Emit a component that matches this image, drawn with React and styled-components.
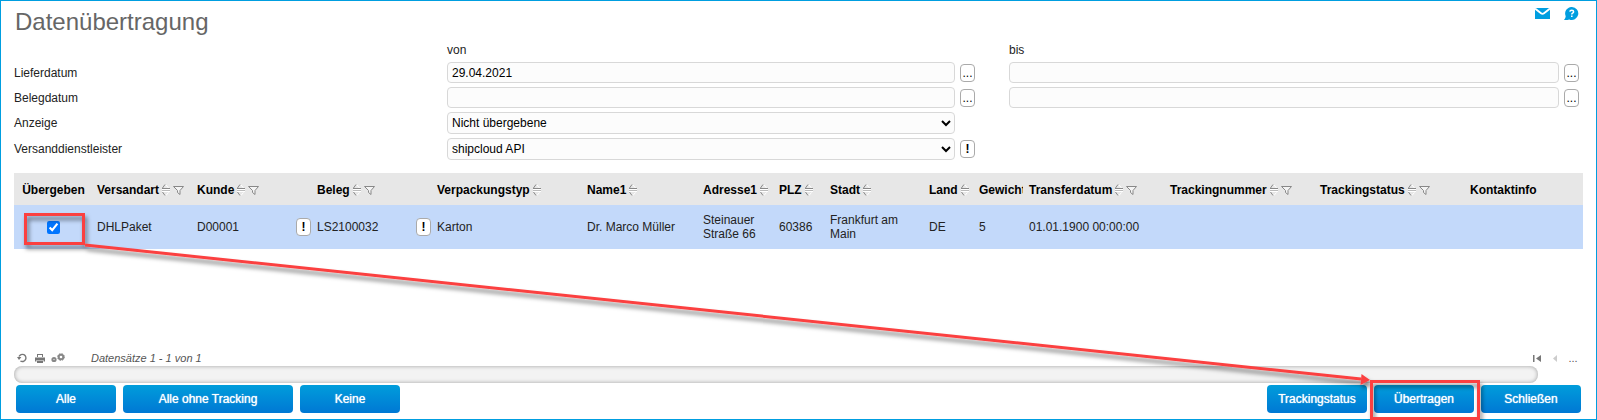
import React from 'react';
import styled, { createGlobalStyle } from 'styled-components';

const GlobalStyle = createGlobalStyle`
  * {
    box-sizing: border-box;
  }

  body {
    margin: 0;
    background: #fff;
    color: #222;
    font-family: 'Liberation Sans', Arial, sans-serif;
    font-size: 12px;
    line-height: 14px;
  }

  button,
  input,
  select {
    font: inherit;
  }
`;

const Page = styled.div`
  position: relative;
  display: flex;
  flex-direction: column;
  min-height: 100vh;
  padding: 6px 13px;
  border: 1px solid #009ee0;
`;

const PageHeader = styled.header`
  display: flex;
  justify-content: space-between;
  align-items: flex-start;
  padding-right: 4px;
  height: 35px;
`;

const Title = styled.h1`
  margin: 0;
  padding-left: 1px;
  color: #666;
  font-size: 24px;
  font-weight: normal;
  line-height: 30px;
`;

const HeaderLinks = styled.nav`
  display: flex;
  gap: 14px;

  a {
    display: flex;
  }
`;

const Filters = styled.form`
  display: flex;
  flex-direction: column;
  gap: 4px;
  padding-right: 4px;
`;

const FilterRow = styled.div`
  display: grid;
  grid-template-columns: 433px 562fr 570fr;
  align-items: center;
  min-height: ${props => (props.$head ? '16px' : '21px')};
`;

const Field = styled.div`
  display: flex;
  align-items: center;
  gap: 5px;
  padding-right: ${props => (props.$last ? '0' : '34px')};
`;

const TextInput = styled.input`
  flex: 1;
  min-width: 0;
  height: 21px;
  padding: 0 4px;
  border: 1px solid #d8d8d8;
  border-radius: 4px;
  background: #fcfcfc;
  color: #000;
`;

const Select = styled.select`
  flex: 1;
  min-width: 0;
  height: 22px;
  padding: 0 1px 0 0;
  border: 1px solid #d8d8d8;
  border-radius: 4px;
  background: #fcfcfc;
  color: #000;
`;

const SmallButton = styled.button`
  flex: none;
  width: 15px;
  height: 18px;
  padding: 0;
  border: 1px solid #aaa;
  border-radius: 4px;
  background: #fff;
  color: #000;
  font-weight: ${props => (props.$bold ? 'bold' : 'normal')};
  line-height: 14px;
`;

const Spacer = styled.span`
  flex: none;
  width: 15px;
`;

const Table = styled.table`
  width: 100%;
  margin-top: 13px;
  border-collapse: collapse;
  table-layout: fixed;

  th,
  td {
    padding: 0 0 0 6px;
    text-align: left;
    overflow: hidden;
  }

  th:first-child,
  td:first-child {
    padding-left: 2px;
  }

  th {
    height: 32px;
    padding-top: 1px;
    background: #e7e7e7;
    color: #000;
    white-space: nowrap;
  }

  td {
    height: 44px;
    background: #c3d9fa;
  }
`;

const HeadCell = styled.span`
  display: flex;
  align-items: center;
  justify-content: ${props => (props.$center ? 'center' : 'flex-start')};

  svg {
    flex: none;
  }
`;

const CellContent = styled.div`
  display: flex;
  align-items: center;
  justify-content: ${props => (props.$center ? 'center' : 'space-between')};
`;

const Checkbox = styled.input`
  width: 13px;
  height: 13px;
  margin: 0;
`;

const Footer = styled.footer`
  margin-top: auto;
`;

const Pager = styled.div`
  display: flex;
  align-items: center;
  gap: 4px;
  height: 16px;
  padding: 0 3px 0 1px;
  color: #555;
  font-size: 11px;
`;

const RecordCount = styled.em`
  flex: 1;
  padding-left: 22px;
`;

const IconButton = styled.button`
  display: flex;
  justify-content: center;
  align-items: center;
  width: 14px;
  height: 14px;
  padding: 0;
  border: 0;
  background: none;
  color: #555;
`;

const ScrollTrack = styled.div`
  height: 17px;
  margin: 0 45px 2px 0;
  border-radius: 8px;
  background: #f3f3f3;
  box-shadow: inset 0 0 4px rgba(0, 0, 0, 0.35);
`;

const Actions = styled.div`
  display: flex;
  justify-content: space-between;
  padding: 0 2px;
`;

const ActionGroup = styled.div`
  display: flex;
  gap: 7px;
`;

const ActionButton = styled.button`
  width: ${props => (props.$wide ? '170px' : '100px')};
  height: 28px;
  padding: 0;
  border: 0;
  border-radius: 4px;
  background: linear-gradient(#009ddb, #0078d4);
  color: #fff;
  text-shadow: 0 0 1px #fff;
`;

const Annotation = styled.svg`
  position: absolute;
  top: -1px;
  left: -1px;
  pointer-events: none;
`;

const columns = [
  { label: 'Übergeben', width: 77, center: true },
  { label: 'Versandart', width: 100, sort: true, filter: true },
  { label: 'Kunde', width: 120, sort: true, filter: true },
  { label: 'Beleg', width: 120, sort: true, filter: true },
  { label: 'Verpackungstyp', width: 150, sort: true },
  { label: 'Name1', width: 116, sort: true },
  { label: 'Adresse1', width: 76, sort: true },
  { label: 'PLZ', width: 51, sort: true },
  { label: 'Stadt', width: 99, sort: true },
  { label: 'Land', width: 50, sort: true },
  { label: 'Gewicht', width: 50 },
  { label: 'Transferdatum', width: 141, sort: true, filter: true },
  { label: 'Trackingnummer', width: 150, sort: true, filter: true },
  { label: 'Trackingstatus', width: 150, sort: true, filter: true },
  { label: 'Kontaktinfo', width: 119 },
];

const SortIcon = () => (
  <svg width="13" height="14" viewBox="0 0 13 14" fill="none">
    <path stroke="#fff" d="M7 2L9.5 5M3 6.5H11M3 8.5H11M9.5 9.5L7 12.5" />
    <path stroke="#888" d="M3.5 5L6 1.5M3 5.5H11M3.5 9L6 12.5" />
    <path stroke="#bbb" d="M3 7.5H11" />
  </svg>
);

const FilterIcon = () => (
  <svg width="14" height="12" viewBox="0 0 14 12" fill="none" stroke="#888">
    <path fill="#f4f4f4" d="M1.5 2.5H11.5L8 6.5V10.5L5.5 8.5V6.5Z" />
  </svg>
);

const MailIcon = () => (
  <svg width="15" height="13" viewBox="0 0 15 13">
    <path fill="#009ee0" d="M0 1H15V12H0Z" />
    <path fill="none" stroke="#fff" strokeWidth="1.8" d="M0 1.5L6 6.3Q7.5 7.5 9 6.3L15 1.5" />
  </svg>
);

const HelpIcon = () => (
  <svg width="15" height="14" viewBox="0 0 15 14">
    <path fill="#009ee0" d="M8 0A6.5 6.5 0 1 1 5.3 12.5Q3 13.2 0 13Q1.6 11.5 1.7 9.2A6.5 6.5 0 0 1 8 0Z" />
    <path fill="none" stroke="#fff" strokeWidth="1.5" d="M5.8 4.6Q6 3.2 7.8 3.2Q9.6 3.2 9.6 4.7Q9.6 5.6 8.5 6.2Q7.8 6.6 7.8 7.6M7.8 8.6V10" />
  </svg>
);

const DateField = ({ id, label, value, last }) => (
  <Field $last={last}>
    <TextInput id={id} aria-label={label} type="text" defaultValue={value} />
    <SmallButton type="button">...</SmallButton>
  </Field>
);

function FilterForm() {
  return (
    <Filters>
      <FilterRow $head>
        <span />
        <span>von</span>
        <span>bis</span>
      </FilterRow>
      <FilterRow>
        <label htmlFor="lieferdatum">Lieferdatum</label>
        <DateField id="lieferdatum" value="29.04.2021" />
        <DateField label="Lieferdatum bis" last />
      </FilterRow>
      <FilterRow>
        <label htmlFor="belegdatum">Belegdatum</label>
        <DateField id="belegdatum" />
        <DateField label="Belegdatum bis" last />
      </FilterRow>
      <FilterRow>
        <label htmlFor="anzeige">Anzeige</label>
        <Field>
          <Select id="anzeige">
            <option>Nicht übergebene</option>
          </Select>
          <Spacer />
        </Field>
      </FilterRow>
      <FilterRow>
        <label htmlFor="dienstleister">Versanddienstleister</label>
        <Field>
          <Select id="dienstleister">
            <option>shipcloud API</option>
          </Select>
          <SmallButton type="button" $bold>!</SmallButton>
        </Field>
      </FilterRow>
    </Filters>
  );
}

function DeliveryTable() {
  return (
    <Table>
      <colgroup>
        {columns.map(col => (
          <col key={col.label} width={`${(col.width / 1569) * 100}%`} />
        ))}
      </colgroup>
      <thead>
        <tr>
          {columns.map(col => (
            <th key={col.label}>
              <HeadCell $center={col.center}>
                {col.label}
                {col.sort && <SortIcon />}
                {col.filter && <FilterIcon />}
              </HeadCell>
            </th>
          ))}
        </tr>
      </thead>
      <tbody>
        <tr>
          <td>
            <CellContent $center>
              <Checkbox type="checkbox" aria-label="Übergeben" defaultChecked />
            </CellContent>
          </td>
          <td>DHLPaket</td>
          <td>
            <CellContent>
              D00001
              <SmallButton type="button" $bold>!</SmallButton>
            </CellContent>
          </td>
          <td>
            <CellContent>
              LS2100032
              <SmallButton type="button" $bold>!</SmallButton>
            </CellContent>
          </td>
          <td>Karton</td>
          <td>Dr. Marco Müller</td>
          <td>Steinauer Straße 66</td>
          <td>60386</td>
          <td>Frankfurt am<br />Main</td>
          <td>DE</td>
          <td>5</td>
          <td>01.01.1900 00:00:00</td>
          <td />
          <td />
          <td />
        </tr>
      </tbody>
    </Table>
  );
}

// red frames and arrow from the checked row to the transfer button
function Highlight() {
  return (
    <Annotation width="1597" height="420" viewBox="0 0 1597 420">
      <defs>
        <filter id="shadow" x="-5%" y="-5%" width="110%" height="115%">
          <feDropShadow dx="2" dy="4" stdDeviation="2" floodOpacity="0.5" />
        </filter>
      </defs>
      <g filter="url(#shadow)" fill="none" stroke="#fb4140" strokeWidth="3">
        <rect x="25.5" y="214.5" width="58" height="29" />
        <rect x="1371.5" y="381.5" width="107" height="37" />
        <path d="M85 245L1361 379" />
        <path fill="#fb4140" stroke="none" d="M1370 380L1360.5 385L1361.5 374Z" />
      </g>
    </Annotation>
  );
}

export default function App() {
  return (
    <Page>
      <GlobalStyle />
      <PageHeader>
        <Title>Datenübertragung</Title>
        <HeaderLinks>
          <a href="#mail" aria-label="E-Mail"><MailIcon /></a>
          <a href="#hilfe" aria-label="Hilfe"><HelpIcon /></a>
        </HeaderLinks>
      </PageHeader>
      <FilterForm />
      <DeliveryTable />
      <Footer>
        <Pager>
          <IconButton type="button" aria-label="Aktualisieren">
            <svg width="10" height="10" viewBox="0 0 10 10" fill="none" stroke="#777" strokeWidth="1.4">
              <path d="M2 3.6A3.6 3.6 0 1 1 3.4 8" />
              <path fill="#777" stroke="none" d="M0 4H4.4L2 7Z" />
            </svg>
          </IconButton>
          <IconButton type="button" aria-label="Drucken">
            <svg width="10" height="9" viewBox="0 0 10 9" fill="#777">
              <path d="M2 0H8V3H7V1H3V3H2ZM0 3.5H10V7.5H8.5V6H1.5V7.5H0ZM2 6.5H8V9H2Z" />
            </svg>
          </IconButton>
          <IconButton type="button" aria-label="Einstellungen">
            <svg width="14" height="10" viewBox="0 0 14 10" fill="none" stroke="#888" strokeWidth="2">
              <circle cx="3" cy="6.5" r="1.6" />
              <circle cx="10" cy="4" r="2.3" />
              <circle cx="10" cy="4" r="3.4" strokeWidth="1" strokeDasharray="1.4 1.3" />
            </svg>
          </IconButton>
          <RecordCount>Datensätze 1 - 1 von 1</RecordCount>
          <IconButton type="button" aria-label="Erste Seite">
            <svg width="8" height="7" viewBox="0 0 8 7" fill="#777">
              <path d="M0 0H1.5V7H0ZM8 0V7L3 3.5Z" />
            </svg>
          </IconButton>
          <IconButton type="button" aria-label="Vorherige Seite">
            <svg width="4" height="7" viewBox="0 0 4 7" fill="#ccc">
              <path d="M4 0V7L0 3.5Z" />
            </svg>
          </IconButton>
          <IconButton type="button">...</IconButton>
        </Pager>
        <ScrollTrack />
        <Actions>
          <ActionGroup>
            <ActionButton type="button">Alle</ActionButton>
            <ActionButton type="button" $wide>Alle ohne Tracking</ActionButton>
            <ActionButton type="button">Keine</ActionButton>
          </ActionGroup>
          <ActionGroup>
            <ActionButton type="button">Trackingstatus</ActionButton>
            <ActionButton type="button">Übertragen</ActionButton>
            <ActionButton type="button">Schließen</ActionButton>
          </ActionGroup>
        </Actions>
      </Footer>
      <Highlight />
    </Page>
  );
}
